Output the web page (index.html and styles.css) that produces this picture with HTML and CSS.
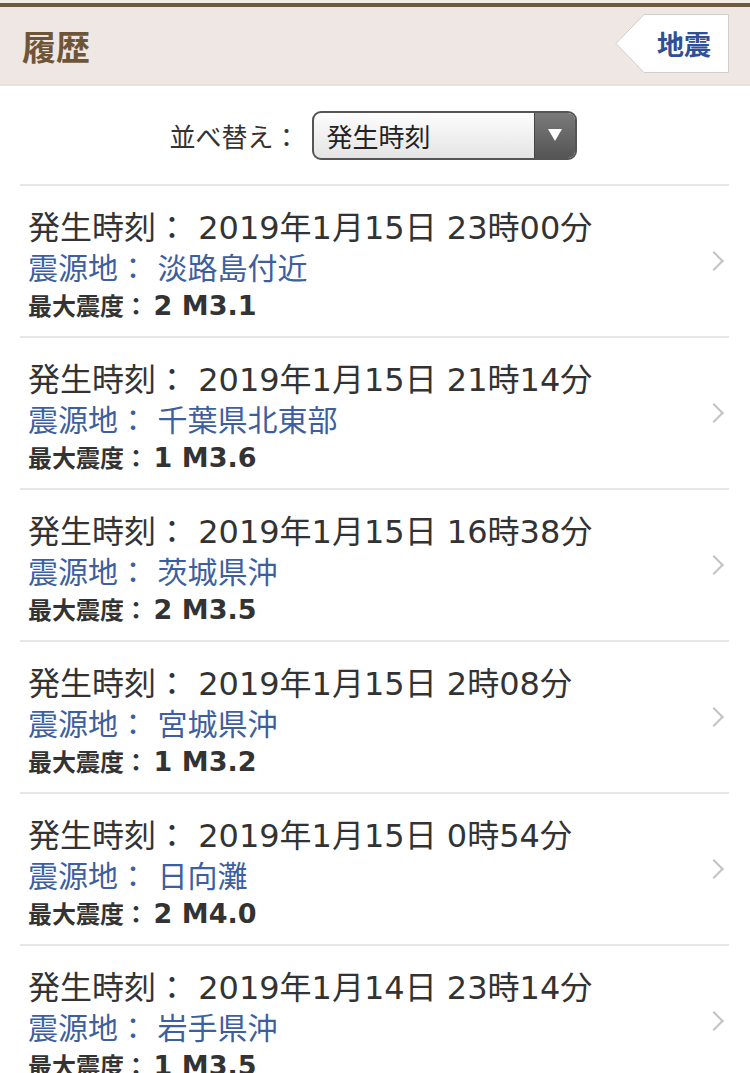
FILE: index.html
```html
<!DOCTYPE html>
<html lang="ja">
<head>
    <meta charset="UTF-8">
    <meta name="viewport" content="width=device-width, initial-scale=1.0">
    <title>履歴</title>
    <link rel="stylesheet" href="styles.css">
</head>
<body>
    <header class="header">
        <h1 class="title">履歴</h1>
        <a class="back-btn" href="#">
            <svg class="back-shape" width="114" height="59" viewBox="0 0 114 59">
                <polygon points="1,29.5 29,0.5 113.5,0.5 113.5,58.5 29,58.5" fill="#fff" stroke="#d2cdca" stroke-width="1"/>
            </svg>
            <span class="back-label">地震</span>
        </a>
    </header>

    <div class="sort-row">
        <span class="sort-label">並べ替え：</span>
        <div class="select">
            <span class="select-value">発生時刻</span>
            <span class="select-arrow"></span>
        </div>
    </div>

    <ul class="quake-list">
        <li class="quake">
            <div class="quake-info">
                <div class="quake-time">発生時刻： 2019年1月15日 23時00分</div>
                <div class="quake-place">震源地： 淡路島付近</div>
                <div class="quake-scale"><span class="scale-label">最大震度：</span> <span class="scale-value">2 M3.1</span></div>
            </div>
            <span class="chevron"></span>
        </li>
        <li class="quake">
            <div class="quake-info">
                <div class="quake-time">発生時刻： 2019年1月15日 21時14分</div>
                <div class="quake-place">震源地： 千葉県北東部</div>
                <div class="quake-scale"><span class="scale-label">最大震度：</span> <span class="scale-value">1 M3.6</span></div>
            </div>
            <span class="chevron"></span>
        </li>
        <li class="quake">
            <div class="quake-info">
                <div class="quake-time">発生時刻： 2019年1月15日 16時38分</div>
                <div class="quake-place">震源地： 茨城県沖</div>
                <div class="quake-scale"><span class="scale-label">最大震度：</span> <span class="scale-value">2 M3.5</span></div>
            </div>
            <span class="chevron"></span>
        </li>
        <li class="quake">
            <div class="quake-info">
                <div class="quake-time">発生時刻： 2019年1月15日 2時08分</div>
                <div class="quake-place">震源地： 宮城県沖</div>
                <div class="quake-scale"><span class="scale-label">最大震度：</span> <span class="scale-value">1 M3.2</span></div>
            </div>
            <span class="chevron"></span>
        </li>
        <li class="quake">
            <div class="quake-info">
                <div class="quake-time">発生時刻： 2019年1月15日 0時54分</div>
                <div class="quake-place">震源地： 日向灘</div>
                <div class="quake-scale"><span class="scale-label">最大震度：</span> <span class="scale-value">2 M4.0</span></div>
            </div>
            <span class="chevron"></span>
        </li>
        <li class="quake">
            <div class="quake-info">
                <div class="quake-time">発生時刻： 2019年1月14日 23時14分</div>
                <div class="quake-place">震源地： 岩手県沖</div>
                <div class="quake-scale"><span class="scale-label">最大震度：</span> <span class="scale-value">1 M3.5</span></div>
            </div>
            <span class="chevron"></span>
        </li>
    </ul>
</body>
</html>
```

FILE: styles.css
```css
body {
    margin: 0;
    background: #fff;
    font-family: "DejaVu Sans", "Noto Sans CJK JP", sans-serif;
    color: #333;
}

.header {
    display: flex;
    justify-content: space-between;
    align-items: center;
    height: 77px;
    padding: 0 21px 0 22px;
    background: #efe7e4;
    border-top: 4px solid #6e5a3f;
    box-shadow: 0 -3px 0 #f4ede6;
    margin-top: 3px;
    border-bottom: 2px solid #e8e1dd;
}

.title {
    margin: 0;
    font-family: "Noto Sans CJK JP", sans-serif;
    font-size: 34px;
    font-weight: 700;
    color: #6f5537;
    line-height: 1;
}

.back-btn {
    position: relative;
    display: flex;
    align-items: center;
    justify-content: flex-end;
    width: 114px;
    height: 59px;
    margin-top: -4px;
    text-decoration: none;
}

.back-shape {
    position: absolute;
    top: 0;
    left: 0;
}

.back-label {
    position: relative;
    margin-right: 18px;
    font-family: "Noto Sans CJK JP", sans-serif;
    font-size: 27px;
    font-weight: 700;
    color: #2f4f98;
}

.sort-row {
    display: flex;
    justify-content: center;
    align-items: center;
    gap: 12px;
    height: 98px;
    padding-right: 4px;
}

.sort-label {
    font-family: "Noto Sans CJK JP", sans-serif;
    font-size: 26px;
    color: #333;
}

.select {
    display: flex;
    align-items: stretch;
    width: 261px;
    height: 45px;
    border: 2px solid #555;
    border-radius: 9px;
    overflow: hidden;
    background: linear-gradient(#fdfdfd, #e4e4e4);
}

.select-value {
    flex-grow: 1;
    display: flex;
    align-items: center;
    padding-left: 13px;
    font-family: "Noto Sans CJK JP", sans-serif;
    font-size: 26px;
    color: #222;
}

.select-arrow {
    width: 40px;
    display: flex;
    align-items: center;
    justify-content: center;
    background: linear-gradient(#7a7a7a, #555);
    border-left: 1px solid #444;
}

.select-arrow::after {
    content: "";
    border-left: 7px solid transparent;
    border-right: 7px solid transparent;
    border-top: 12px solid #fff;
}

.quake-list {
    list-style: none;
    margin: 0 21px 0 20px;
    padding: 0;
}

.quake {
    display: flex;
    align-items: flex-start;
    justify-content: space-between;
    height: 128px;
    border-top: 2px solid #e7e7e7;
    padding: 22px 8px 0 8px;
}

.quake-info {
    display: flex;
    flex-direction: column;
}

.quake-time {
    font-size: 32px;
    line-height: 40px;
    color: #333;
}

.quake-place {
    font-size: 30px;
    line-height: 42px;
    color: #3d5f9f;
}

.quake-scale {
    line-height: 30px;
    font-weight: 700;
    color: #333;
}

.scale-label {
    font-family: "Noto Sans CJK JP", sans-serif;
    font-size: 24px;
}

.scale-value {
    font-size: 27px;
}

.chevron {
    align-self: center;
    width: 12px;
    height: 12px;
    margin-top: -22px;
    border-top: 2px solid #c2c2c2;
    border-right: 2px solid #c2c2c2;
    transform: rotate(45deg);
}
```
